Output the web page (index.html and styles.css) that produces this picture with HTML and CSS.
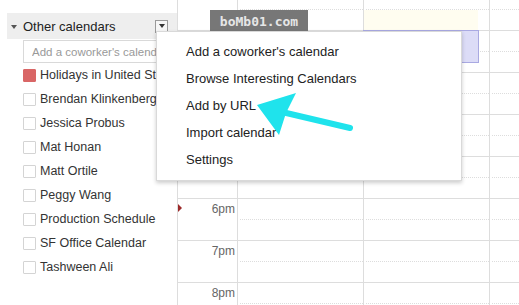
FILE: index.html
```html
<!DOCTYPE html>
<html lang="en">

<head>
    <meta charset="UTF-8">
    <meta name="viewport" content="width=device-width, initial-scale=1.0">
    <title>Other calendars</title>
    <link rel="stylesheet" href="styles.css">
</head>

<body>
    <div class="app">
        <aside class="sidebar">
            <div class="section-head">
                <span class="caret"></span>
                <span class="section-title">Other calendars</span>
                <span class="menu-btn"><span class="menu-btn-arrow"></span></span>
            </div>
            <input class="coworker" type="text" placeholder="Add a coworker's calendar">
            <ul class="cal-list">
                <li><span class="swatch swatch-red"></span>Holidays in United States</li>
                <li><span class="swatch"></span>Brendan Klinkenberg</li>
                <li><span class="swatch"></span>Jessica Probus</li>
                <li><span class="swatch"></span>Mat Honan</li>
                <li><span class="swatch"></span>Matt Ortile</li>
                <li><span class="swatch"></span>Peggy Wang</li>
                <li><span class="swatch"></span>Production Schedule</li>
                <li><span class="swatch"></span>SF Office Calendar</li>
                <li><span class="swatch"></span>Tashween Ali</li>
            </ul>
        </aside>

        <main class="grid">
            <!-- hours hidden behind the menu are left without labels -->
            <div class="hour">
                <div class="time"></div>
                <div class="day"><div class="half"></div></div>
                <div class="day"><div class="half"></div><div class="tint"></div></div>
                <div class="day"><div class="half"></div></div>
            </div>
            <div class="hour">
                <div class="time"></div>
                <div class="day"><div class="half"></div></div>
                <div class="day"><div class="half"></div><div class="event"></div></div>
                <div class="day"><div class="half"></div></div>
            </div>
            <div class="hour">
                <div class="time"></div>
                <div class="day"><div class="half"></div></div>
                <div class="day"><div class="half"></div></div>
                <div class="day"><div class="half"></div></div>
            </div>
            <div class="hour">
                <div class="time"></div>
                <div class="day"><div class="half"></div></div>
                <div class="day"><div class="half"></div></div>
                <div class="day"><div class="half"></div></div>
            </div>
            <div class="hour">
                <div class="time"></div>
                <div class="day"><div class="half"></div></div>
                <div class="day"><div class="half"></div></div>
                <div class="day"><div class="half"></div></div>
            </div>
            <div class="hour">
                <div class="time">6pm</div>
                <div class="day"><div class="half"></div></div>
                <div class="day"><div class="half"></div></div>
                <div class="day"><div class="half"></div></div>
            </div>
            <div class="hour">
                <div class="time">7pm</div>
                <div class="day"><div class="half"></div></div>
                <div class="day"><div class="half"></div></div>
                <div class="day"><div class="half"></div></div>
            </div>
            <div class="hour">
                <div class="time">8pm</div>
                <div class="day"><div class="half"></div></div>
                <div class="day"><div class="half"></div></div>
                <div class="day"><div class="half"></div></div>
            </div>
        </main>
    </div>

    <!-- current time marker -->
    <span class="now-marker"></span>

    <div class="watermark">boMb01.com</div>

    <ul class="dropdown">
        <li>Add a coworker's calendar</li>
        <li>Browse Interesting Calendars</li>
        <li>Add by URL</li>
        <li>Import calendar</li>
        <li>Settings</li>
    </ul>

    <svg class="pointer" width="519" height="305" viewBox="0 0 519 305">
        <line x1="282" y1="112" x2="350" y2="128" stroke="#1fe3ec" stroke-width="6" stroke-linecap="round" />
        <polygon points="257,105 296,93 286,113 279,135" fill="#1fe3ec" />
    </svg>
</body>

</html>
```

FILE: styles.css
```css
body {
    margin: 0;
    font-family: 'Liberation Sans', Arial, sans-serif;
    background-color: #fff;
    color: #222;
    overflow: hidden;
}

.app {
    display: flex;
    height: 305px;
    overflow: hidden;
}

/* left column */

.sidebar {
    width: 177px;
    flex-shrink: 0;
    overflow: hidden;
}

.section-head {
    display: flex;
    align-items: center;
    height: 26px;
    margin: 13px 0 0 7px;
    background-color: #eee;
}

.caret {
    width: 0;
    height: 0;
    margin: 1px 6px 0 4px;
    border-left: 3px solid transparent;
    border-right: 3px solid transparent;
    border-top: 4px solid #555;
}

.section-title {
    font-size: 13px;
    color: #222;
}

.menu-btn {
    display: flex;
    align-items: center;
    justify-content: center;
    box-sizing: border-box;
    width: 13px;
    height: 13px;
    margin-left: auto;
    margin-right: 9px;
    border: 1px solid #999;
    background-color: #f6f6f6;
}

.menu-btn-arrow {
    width: 0;
    height: 0;
    border-left: 3px solid transparent;
    border-right: 3px solid transparent;
    border-top: 4px solid #333;
}

.coworker {
    display: block;
    box-sizing: border-box;
    width: 150px;
    height: 23px;
    margin: 1px 0 0 23px;
    padding: 0 8px;
    border: 1px solid #d9d9d9;
    font-family: inherit;
    font-size: 11.5px;
}

.coworker::placeholder {
    color: #999;
}

.cal-list {
    list-style: none;
    margin: 0;
    padding: 0;
}

.cal-list li {
    display: flex;
    align-items: center;
    height: 24px;
    padding-left: 23px;
    font-size: 12.5px;
    color: #333;
    white-space: nowrap;
}

.swatch {
    box-sizing: border-box;
    width: 13px;
    height: 13px;
    margin-right: 4px;
    border: 1px solid #d4d4d4;
    border-radius: 1px;
    flex-shrink: 0;
}

.swatch-red {
    background-color: #d96666;
    border-color: #d96666;
}

/* calendar grid */

.grid {
    flex: 1;
    margin-top: -12px;
    border-left: 1px solid #ddd;
}

.hour {
    display: flex;
    box-sizing: border-box;
    height: 42px;
    border-top: 1px solid #ddd;
}

.time {
    box-sizing: border-box;
    width: 60px;
    flex-shrink: 0;
    padding: 3px 2px 0 0;
    border-right: 1px solid #ddd;
    text-align: right;
    font-size: 12px;
    color: #666;
}

.day {
    position: relative;
    box-sizing: border-box;
    width: 126px;
    flex-shrink: 0;
    border-right: 1px solid #ddd;
}

.half {
    height: 20px;
    margin-left: 2px;
    border-bottom: 1px dotted #ddd;
}

.tint {
    width: 114px;
    height: 20px;
    background-color: #fffdf0;
}

.event {
    position: absolute;
    top: -1px;
    left: -1px;
    box-sizing: border-box;
    width: 116px;
    height: 33px;
    border: 1px solid #a9a9e2;
    background-color: #dcdcf7;
}

/* overlays */

.now-marker {
    position: absolute;
    left: 178px;
    top: 204px;
    width: 0;
    height: 0;
    border-top: 4px solid transparent;
    border-bottom: 4px solid transparent;
    border-left: 4px solid #9c2a2a;
}

.watermark {
    position: absolute;
    left: 210px;
    top: 10px;
    width: 98px;
    height: 23px;
    line-height: 23px;
    background-color: #777;
    color: #e6e6e6;
    font-family: 'DejaVu Sans Mono', monospace;
    font-weight: bold;
    font-size: 13px;
    text-align: center;
}

.dropdown {
    position: absolute;
    left: 156px;
    top: 31px;
    width: 306px;
    box-sizing: border-box;
    margin: 0;
    padding: 6px 0 7px;
    list-style: none;
    background-color: #fff;
    border: 1px solid rgba(0, 0, 0, 0.15);
    box-shadow: 0 2px 4px rgba(0, 0, 0, 0.2);
}

.dropdown li {
    height: 27px;
    line-height: 27px;
    padding-left: 29px;
    font-size: 13px;
    color: #222;
}

.pointer {
    position: absolute;
    left: 0;
    top: 0;
    pointer-events: none;
}
```
